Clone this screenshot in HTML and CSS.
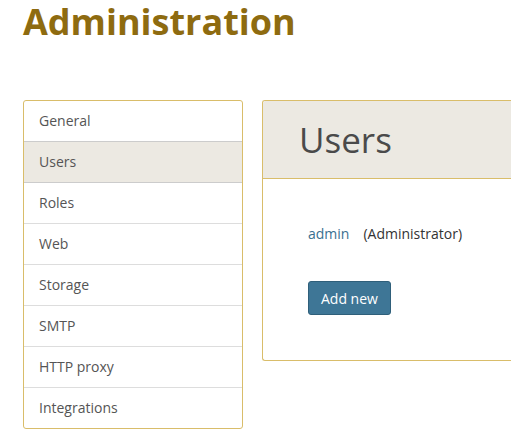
FILE: index.html
```html
<!DOCTYPE html>
<html>
<head>
<meta charset="utf-8">
<link rel="stylesheet" href="styles.css">
</head>
<body>
<div class="page">
  <h1 class="title">Administration</h1>
  <div class="layout">
    <ul class="nav">
      <li class="nav-item">General</li>
      <li class="nav-item active">Users</li>
      <li class="nav-item">Roles</li>
      <li class="nav-item">Web</li>
      <li class="nav-item">Storage</li>
      <li class="nav-item">SMTP</li>
      <li class="nav-item">HTTP proxy</li>
      <li class="nav-item">Integrations</li>
    </ul>
    <div class="panel">
      <div class="panel-head"><h2 class="panel-title">Users</h2></div>
      <div class="panel-body">
        <div class="user-row"><a class="user-link">admin</a><span class="user-role">(Administrator)</span></div>
        <button class="btn">Add new</button>
      </div>
    </div>
  </div>
</div>
</body>
</html>
```
FILE: styles.css
```css
html, body { margin: 0; padding: 0; }
body {
  font-family: "Open Sans", "Liberation Sans", sans-serif;
  font-size: 14px;
  color: #333;
  background: #fff;
  overflow: hidden;
  width: 511px;
  height: 438px;
}
.page { padding: 0 0 0 23px; }
.title {
  margin: 0;
  padding-top: 1px;
  font-size: 36px;
  font-weight: 700;
  line-height: 41px;
  color: #8e6b10;
}
.layout {
  display: flex;
  gap: 19px;
  margin-top: 58px;
  align-items: flex-start;
}
.nav {
  list-style: none;
  margin: 0;
  padding: 0;
  width: 218px;
  flex: none;
  border: 1px solid #d9bd6a;
  border-radius: 3px;
  overflow: hidden;
}
.nav-item {
  height: 40px;
  line-height: 40px;
  padding-left: 15px;
  color: #555;
  border-top: 1px solid #ddd;
}
.nav-item:first-child { border-top: none; }
.nav-item.active { background: #ece9e2; border-top-color: #ccc; }
.nav-item.active + .nav-item { border-top-color: #ccc; }
.panel {
  flex: 1 0 249px;
  border: 1px solid #d9bd6a;
  border-right: none;
  border-radius: 3px 0 0 3px;
  overflow: hidden;
  height: 259px;
}
.panel-head {
  background: #ece9e2;
  border-bottom: 1px solid #d9bd6a;
  height: 77px;
  display: flex;
  align-items: center;
  padding-left: 36px;
}
.panel-title {
  margin: 0;
  font-size: 35px;
  font-weight: 500;
  color: #4a4a4a;
  line-height: 40px;
}
.panel-body { padding: 43px 45px 0; }
.user-row { height: 24px; line-height: 24px; white-space: nowrap; }
.user-link { color: #3a7090; margin-right: 14px; }
.user-role { color: #333; }
.btn {
  margin-top: 35px;
  font-family: inherit;
  font-size: 14px;
  color: #fff;
  background: #3e7696;
  border: 1px solid #2f5f7a;
  border-radius: 3px;
  height: 34px;
  padding: 0 12px;
}
```
